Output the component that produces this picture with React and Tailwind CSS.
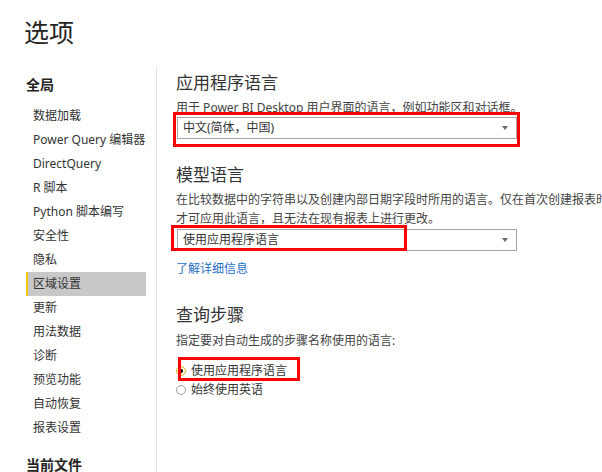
const FONT = "font-['Noto_Sans','Noto_Sans_CJK_SC',sans-serif]"

const navItems = [
  '数据加载',
  'Power Query 编辑器',
  'DirectQuery',
  'R 脚本',
  'Python 脚本编写',
  '安全性',
  '隐私',
  '区域设置',
  '更新',
  '用法数据',
  '诊断',
  '预览功能',
  '自动恢复',
  '报表设置',
]

const Select = ({ value, className = '' }) => (
  <div
    className={`ml-[1px] w-[340px] h-[22px] border border-[#a6a6a6] bg-white flex items-center justify-between pl-[5px] pr-[8px] ${className}`}
  >
    <span className="text-[12px] leading-[20px] text-[#333]">{value}</span>
    <span className="w-0 h-0 border-l-[3.5px] border-r-[3.5px] border-t-[4px] border-l-transparent border-r-transparent border-t-[#666]" />
  </div>
)

const Radio = ({ checked, label }) => (
  <div className="h-[19px] flex items-center">
    <span
      className={`w-[10px] h-[10px] rounded-full border flex items-center justify-center ${
        checked ? 'border-[#e0b324] bg-[#fff8dc]' : 'border-[#a0a0a0] bg-white'
      }`}
    >
      {checked && <span className="w-[4px] h-[4px] rounded-full bg-black" />}
    </span>
    <span className="ml-[5px] text-[12px] text-[#333]">{label}</span>
  </div>
)

export default function App() {
  return (
    <div className={`relative w-[602px] h-[472px] overflow-hidden bg-white ${FONT}`}>
      {/* title */}
      <div className="h-[67px] pl-[24px] pt-[15px]">
        <h1 className="text-[25px] leading-[34px] text-[#252423]">选项</h1>
      </div>

      <div className="flex h-[405px]">
        {/* left nav */}
        <div className="w-[157px] shrink-0 border-r border-[#e1e1e1]">
          <div className="h-[37px] pl-[26px] pt-[1px] text-[14px] font-bold leading-[34px] text-[#252423]">全局</div>
          {navItems.map((item) => {
            const active = item === '区域设置'
            return (
              <div
                key={item}
                className={`ml-[26px] w-[120px] h-[24px] pl-[5px] border-l-2 text-[12px] leading-[24px] text-[#333] whitespace-nowrap ${
                  active ? 'border-[#f2c811] bg-[#c8c8c8]' : 'border-transparent'
                }`}
              >
                {item}
              </div>
            )
          })}
          <div className="mt-[8px] h-[34px] pl-[26px] text-[14px] font-bold leading-[34px] text-[#252423]">当前文件</div>
        </div>

        {/* right content */}
        <div className="pl-[19px] min-w-0">
          <h2 className="h-[31px] pt-[1px] text-[17px] leading-[30px] text-[#333]">应用程序语言</h2>
          <p className="h-[18px] pt-[1px] text-[12px] leading-[18px] text-[#444] whitespace-nowrap">
            用于 Power BI Desktop 用户界面的语言，例如功能区和对话框。
          </p>
          <Select value="中文(简体，中国)" className="mt-[1px]" />

          <h2 className="mt-[21px] h-[30px] text-[17px] leading-[30px] text-[#333]">模型语言</h2>
          <p className="text-[12px] leading-[19px] text-[#444] whitespace-nowrap">
            在比较数据中的字符串以及创建内部日期字段时所用的语言。仅在首次创建报表时，
            <br />
            才可应用此语言，且无法在现有报表上进行更改。
          </p>
          <Select value="使用应用程序语言" className="mt-[1px]" />
          <div className="mt-[9px] h-[18px] text-[12px] leading-[18px] text-[#1f6fc5]">了解详细信息</div>

          <h2 className="mt-[22px] h-[30px] text-[17px] leading-[30px] text-[#333]">查询步骤</h2>
          <p className="mt-[2px] h-[18px] text-[12px] leading-[18px] text-[#444]">指定要对自动生成的步骤名称使用的语言:</p>
          <div className="mt-[11px]">
            <Radio checked label="使用应用程序语言" />
            <Radio label="始终使用英语" />
          </div>
        </div>
      </div>

      {/* red annotation boxes */}
      <div className="absolute left-[173px] top-[112px] w-[347px] h-[35px] border-[3px] border-[#ff0000]" />
      <div className="absolute left-[171px] top-[225px] w-[236px] h-[26px] border-[3px] border-[#ff0000]" />
      <div className="absolute left-[178px] top-[357px] w-[122px] h-[24px] border-[3px] border-[#ff0000]" />
    </div>
  )
}
